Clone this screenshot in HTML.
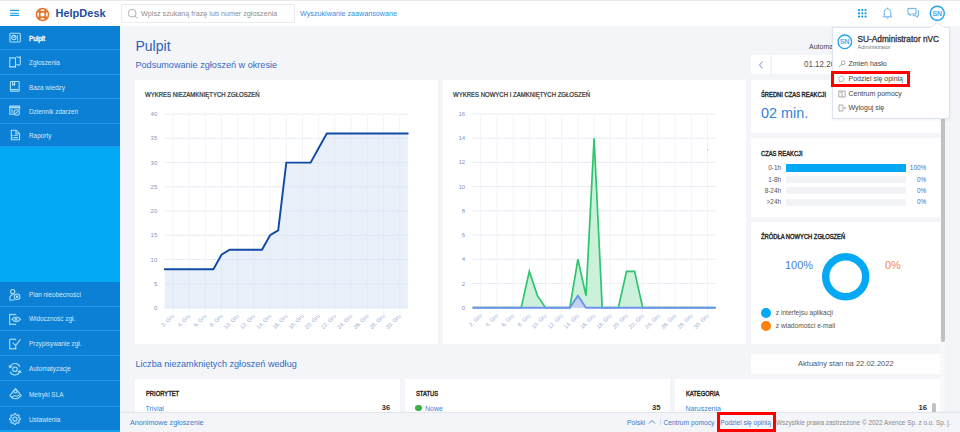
<!DOCTYPE html>
<html><head><meta charset="utf-8">
<style>
*{margin:0;padding:0;box-sizing:border-box}
html,body{width:960px;height:432px;overflow:hidden;background:#f3f5f9;font-family:"Liberation Sans",sans-serif;position:relative}
.abs{position:absolute}
.t{position:absolute;white-space:nowrap;line-height:1}
#top{left:0;top:0;width:960px;height:26px;background:#fff;border-top:1px solid #e9e9e9}
#side{left:0;top:26px;width:120px;height:406px;background:#03a9f4}
.si{position:absolute;left:0;width:120px;background:#0b80d4;border-bottom:1px solid #2398e9}
.si span{position:absolute;left:29px;top:50%;transform:translateY(-50%);font-size:6.4px;color:#d3e9f8;white-space:nowrap}
.si svg{position:absolute;left:9px;top:50%;transform:translateY(-50%)}
.card{position:absolute;background:#fff}
.ct.b{-webkit-text-stroke:0.4px #2a2a2a;transform:scaleX(0.88)}
.ct{position:absolute;font-size:6.6px;font-weight:400;color:#2f2f2f;-webkit-text-stroke:0.22px #2f2f2f;white-space:nowrap;line-height:1;transform:scaleX(0.91);transform-origin:0 0}
svg text.yl{font-family:"Liberation Sans",sans-serif;font-size:6px;fill:#7f95c6}
svg text.xl{font-family:"Liberation Sans",sans-serif;font-size:5.6px;fill:#98acd6}
</style></head><body>

<!-- top bar -->
<div id="top" class="abs">
  <svg class="abs" style="left:10px;top:8px" width="10" height="8" viewBox="0 0 10 8"><rect x="0" y="0.85" width="9.2" height="1.1" rx="0.5" fill="#14a0f0"/><rect x="0" y="3.7" width="9.2" height="1.1" rx="0.5" fill="#14a0f0"/><rect x="0" y="5.85" width="9.2" height="1.1" rx="0.5" fill="#14a0f0"/></svg>
  <svg class="abs" style="left:34.5px;top:5.5px" width="15" height="15" viewBox="0 0 15 15"><circle cx="7.5" cy="7.5" r="6.8" fill="#e8732c"/><circle cx="7.5" cy="7.5" r="2.1" fill="#fff"/><rect x="5.5" y="2.4" width="4" height="1.5" rx="0.6" fill="#fff"/><rect x="5.5" y="11.1" width="4" height="1.5" rx="0.6" fill="#fff"/><rect x="2.4" y="5.5" width="1.5" height="4" rx="0.6" fill="#fff"/><rect x="11.1" y="5.5" width="1.5" height="4" rx="0.6" fill="#fff"/></svg>
  <div class="t" style="left:55.5px;top:6.7px;font-size:11px;font-weight:700;color:#1d4f9f">HelpDesk</div>
  <div class="abs" style="left:121px;top:3px;width:174px;height:19px;border:1px solid #e8ecf0;border-radius:2px;background:#fff"></div>
  <svg class="abs" style="left:127px;top:6.5px" width="12" height="12" viewBox="0 0 12 12"><circle cx="5.2" cy="5.2" r="3.9" fill="none" stroke="#a9a9a9" stroke-width="0.9"/><line x1="8" y1="8" x2="10.5" y2="10.5" stroke="#a9a9a9" stroke-width="0.9"/></svg>
  <div class="t" style="left:141px;top:8.6px;font-size:7.2px;color:#8e8e8e">Wpisz szukaną frazę lub numer zgłoszenia</div>
  <div class="t" style="left:300px;top:9px;font-size:7.2px;color:#2d8fe3">Wyszukiwanie zaawansowane</div>
  <!-- grid icon -->
  <svg class="abs" style="left:857.8px;top:8px" width="9" height="9" viewBox="0 0 9 9" fill="#0d9af0"><circle cx="1.05" cy="1.05" r="1.08"/><circle cx="4.3" cy="1.05" r="1.08"/><circle cx="7.55" cy="1.05" r="1.08"/><circle cx="1.05" cy="4.3" r="1.08"/><circle cx="4.3" cy="4.3" r="1.08"/><circle cx="7.55" cy="4.3" r="1.08"/><circle cx="1.05" cy="7.55" r="1.08"/><circle cx="4.3" cy="7.55" r="1.08"/><circle cx="7.55" cy="7.55" r="1.08"/></svg>
  <!-- bell -->
  <svg class="abs" style="left:882px;top:6.2px" width="11" height="12" viewBox="0 0 11 12"><path d="M2.2 9 L2.2 5.2 C2.2 3.2 3.6 1.8 5.5 1.8 C7.4 1.8 8.8 3.2 8.8 5.2 L8.8 9 L9.8 9.8 L1.2 9.8 Z" fill="none" stroke="#5aa8ea" stroke-width="0.9" stroke-linejoin="round"/><path d="M4.4 10.6 Q5.5 11.8 6.6 10.6" fill="none" stroke="#5aa8ea" stroke-width="0.9"/><line x1="5.5" y1="0.6" x2="5.5" y2="1.8" stroke="#5aa8ea" stroke-width="0.9"/></svg>
  <!-- chat -->
  <svg class="abs" style="left:906.5px;top:6.3px" width="13" height="12" viewBox="0 0 13 12"><path d="M1 1.4 H9 V7 H4.6 L2.8 8.6 V7 H1 Z" fill="none" stroke="#5aa8ea" stroke-width="0.95" stroke-linejoin="round"/><path d="M10.6 3.6 H11.4 V8.8 H10.5 V10.2 L8.9 8.8 H6.3 V8" fill="none" stroke="#5aa8ea" stroke-width="0.95" stroke-linejoin="round"/></svg>
  <!-- avatar -->
  <svg class="abs" style="left:929px;top:4.2px" width="17" height="17" viewBox="0 0 17 17"><circle cx="8.3" cy="8.2" r="7.0" fill="#fff" stroke="#1ea3ef" stroke-width="1.45"/><text x="8.3" y="10.6" text-anchor="middle" font-family="Liberation Sans" font-size="6.8" fill="#2a9be8" stroke="#2a9be8" stroke-width="0.2">SN</text></svg>
</div>

<!-- sidebar -->
<div id="side" class="abs">
  <div class="si" style="top:0.0px;height:24.4px"><span style="color:#fff;-webkit-text-stroke:0.3px #fff">Pulpit</span></div>
  <div class="si" style="top:24.4px;height:24.5px"><span>Zgłoszenia</span></div>
  <div class="si" style="top:48.9px;height:24.4px"><span>Baza wiedzy</span></div>
  <div class="si" style="top:73.3px;height:24.6px"><span>Dziennik zdarzeń</span></div>
  <div class="si" style="top:97.9px;height:23.2px"><span>Raporty</span></div>

  <div class="si" style="top:256.0px;height:24.5px"><span>Plan nieobecności</span></div>
  <div class="si" style="top:280.5px;height:24.8px"><span>Widoczność zgł.</span></div>
  <div class="si" style="top:305.3px;height:25.0px"><span>Przypisywanie zgł.</span></div>
  <div class="si" style="top:330.3px;height:25.0px"><span>Automatyzacje</span></div>
  <div class="si" style="top:355.3px;height:25.5px"><span>Metryki SLA</span></div>
  <div class="si" style="top:380.8px;height:24.7px"><span>Ustawienia</span></div>
</div>
<svg class="abs" style="left:0;top:0" width="120" height="432" viewBox="0 0 120 432" fill="none" stroke="#b0e0fc" stroke-width="1.05" stroke-linejoin="round" stroke-linecap="round">
<rect x="9.9" y="33.2" width="10.4" height="8.7" rx="1"/>
<circle cx="13.9" cy="37.6" r="2.2"/><path d="M13.9 37.6 L15.2 36.4"/><path d="M17.6 35.6 V36.2 M17.6 37.4 V38.2 M17.6 39.4 V40.2"/>
<path d="M9.8 57.6 L11.3 58.3 L12.8 57.6 L14.3 58.3 L15.5 57.8 V67.2 L14.2 66.5 L12.8 67.3 L11.3 66.5 L9.8 67.2 Z"/>
<path d="M16.8 56.8 L18.5 57.5 L20.3 56.8 V64.4 L18.6 65.2 L16.8 64.4"/>
<rect x="10.4" y="81.4" width="8.8" height="9.8" rx="0.8"/><path d="M12.6 81.6 V85.2 L13.6 84.3 L14.6 85.2 V81.6"/><path d="M11.4 89.6 H18.2"/>
<path d="M13.8 114.2 H9.8 V106.1 H19.6 V109.2"/><path d="M9.8 107.6 H19.6"/><path d="M12 109.6 V112.6"/>
<circle cx="16.7" cy="112.5" r="2.7"/><path d="M15.7 113.4 L17.6 111.6"/>
<path d="M11.3 130.2 H16 L19.6 133.7 V139.8 H11.3 Z"/><path d="M15.9 130.4 V133.8 H19.4"/><path d="M14 135.3 H17.5 M14 137.6 H17.5 M11.6 135.3 H12.4 M11.6 137.6 H12.4"/>
<circle cx="12.7" cy="291.6" r="2.1"/><path d="M10 300 C9.3 297 10.4 294.6 13.2 294.4"/><path d="M10 300 H14.2"/>
<circle cx="17.1" cy="296.7" r="2.8"/><circle cx="17.1" cy="296.7" r="0.7" fill="#a8dcfb"/>
<path d="M9.7 314.2 L11.2 314.8 L12.7 314.2 L14.2 314.8 L15.7 314.2 M9.7 314.2 V324.6 L11.2 324 L12.7 324.6 L14.2 324 L15.7 324.6"/>
<path d="M12 319.4 Q16.3 314.8 20.6 319.4 Q16.3 324 12 319.4 Z"/><circle cx="16" cy="319.4" r="0.9"/>
<path d="M15.8 339.6 L14.3 339 L12.8 339.6 L11.3 339 L9.7 339.6 V349 L11.2 348.4 L12.7 349 L14.2 348.4 L15.8 349 V346.5"/>
<path d="M13.2 343.2 L15.6 345.6 L20.2 339.6"/>
<path d="M10 367.2 A5.3 5.3 0 0 1 19.8 366.4"/><path d="M20 371.2 A5.3 5.3 0 0 1 10.2 372"/>
<path d="M9 365.8 L10 367.6 L11.8 366.6" /><path d="M21 372.6 L20 370.8 L18.2 371.8"/>
<circle cx="15" cy="369.2" r="2.3"/>
<path d="M15.5 388.6 L21.2 395.6 Q15.5 402 9.8 395.6 Z"/><circle cx="15.5" cy="391.4" r="1.6"/><path d="M11.5 397.6 Q14 394.8 17 396.4 L19 395"/>
<path d="M20.37 418.47 L20.37 419.53 L19.02 420.22 L18.70 420.98 L19.17 422.43 L18.43 423.17 L16.98 422.70 L16.22 423.02 L15.53 424.37 L14.47 424.37 L13.78 423.02 L13.02 422.70 L11.57 423.17 L10.83 422.43 L11.30 420.98 L10.98 420.22 L9.63 419.53 L9.63 418.47 L10.98 417.78 L11.30 417.02 L10.83 415.57 L11.57 414.83 L13.02 415.30 L13.78 414.98 L14.47 413.63 L15.53 413.63 L16.22 414.98 L16.98 415.30 L18.43 414.83 L19.17 415.57 L18.70 417.02 L19.02 417.78 Z"/><circle cx="15" cy="419" r="2.1"/>
</svg>

<!-- main -->
<div class="t" style="left:135.5px;top:38.5px;font-size:14px;color:#2c61b5">Pulpit</div>
<div class="t" style="left:135.5px;top:61px;font-size:9.1px;color:#3669bf">Podsumowanie zgłoszeń w okresie</div>

<div class="card" style="left:135px;top:80px;width:303px;height:263.5px"></div>
<div class="card" style="left:443px;top:80px;width:303px;height:263.5px"></div>
<div class="ct" style="left:145px;top:92px">WYKRES NIEZAMKNIĘTYCH ZGŁOSZEŃ</div>
<div class="ct" style="left:453px;top:92px">WYKRES NOWYCH I ZAMKNIĘTYCH ZGŁOSZEŃ</div>

<svg class="abs" style="left:0;top:0" width="960" height="432" viewBox="0 0 960 432">
<line x1="164.8" y1="308.0" x2="407.8" y2="308.0" stroke="#e7ecf5" stroke-width="1"/>
<text x="157.3" y="310.0" text-anchor="end" class="yl">0</text>
<line x1="164.8" y1="283.8" x2="407.8" y2="283.8" stroke="#e7ecf5" stroke-width="1"/>
<text x="157.3" y="285.8" text-anchor="end" class="yl">5</text>
<line x1="164.8" y1="259.5" x2="407.8" y2="259.5" stroke="#e7ecf5" stroke-width="1"/>
<text x="157.3" y="261.5" text-anchor="end" class="yl">10</text>
<line x1="164.8" y1="235.3" x2="407.8" y2="235.3" stroke="#e7ecf5" stroke-width="1"/>
<text x="157.3" y="237.3" text-anchor="end" class="yl">15</text>
<line x1="164.8" y1="211.1" x2="407.8" y2="211.1" stroke="#e7ecf5" stroke-width="1"/>
<text x="157.3" y="213.1" text-anchor="end" class="yl">20</text>
<line x1="164.8" y1="186.8" x2="407.8" y2="186.8" stroke="#e7ecf5" stroke-width="1"/>
<text x="157.3" y="188.8" text-anchor="end" class="yl">25</text>
<line x1="164.8" y1="162.6" x2="407.8" y2="162.6" stroke="#e7ecf5" stroke-width="1"/>
<text x="157.3" y="164.6" text-anchor="end" class="yl">30</text>
<line x1="164.8" y1="138.3" x2="407.8" y2="138.3" stroke="#e7ecf5" stroke-width="1"/>
<text x="157.3" y="140.3" text-anchor="end" class="yl">35</text>
<line x1="164.8" y1="114.1" x2="407.8" y2="114.1" stroke="#e7ecf5" stroke-width="1"/>
<text x="157.3" y="116.1" text-anchor="end" class="yl">40</text>
<line x1="172.9" y1="114.1" x2="172.9" y2="312.5" stroke="#f0f3f9" stroke-width="1"/>
<text transform="translate(174.5,316.3) rotate(-45)" text-anchor="end" class="xl">2. Gru</text>
<line x1="189.1" y1="114.1" x2="189.1" y2="312.5" stroke="#f0f3f9" stroke-width="1"/>
<text transform="translate(190.7,316.3) rotate(-45)" text-anchor="end" class="xl">4. Gru</text>
<line x1="205.3" y1="114.1" x2="205.3" y2="312.5" stroke="#f0f3f9" stroke-width="1"/>
<text transform="translate(206.9,316.3) rotate(-45)" text-anchor="end" class="xl">6. Gru</text>
<line x1="221.5" y1="114.1" x2="221.5" y2="312.5" stroke="#f0f3f9" stroke-width="1"/>
<text transform="translate(223.1,316.3) rotate(-45)" text-anchor="end" class="xl">8. Gru</text>
<line x1="237.7" y1="114.1" x2="237.7" y2="312.5" stroke="#f0f3f9" stroke-width="1"/>
<text transform="translate(239.3,316.3) rotate(-45)" text-anchor="end" class="xl">10. Gru</text>
<line x1="253.9" y1="114.1" x2="253.9" y2="312.5" stroke="#f0f3f9" stroke-width="1"/>
<text transform="translate(255.5,316.3) rotate(-45)" text-anchor="end" class="xl">12. Gru</text>
<line x1="270.1" y1="114.1" x2="270.1" y2="312.5" stroke="#f0f3f9" stroke-width="1"/>
<text transform="translate(271.7,316.3) rotate(-45)" text-anchor="end" class="xl">14. Gru</text>
<line x1="286.3" y1="114.1" x2="286.3" y2="312.5" stroke="#f0f3f9" stroke-width="1"/>
<text transform="translate(287.9,316.3) rotate(-45)" text-anchor="end" class="xl">16. Gru</text>
<line x1="302.5" y1="114.1" x2="302.5" y2="312.5" stroke="#f0f3f9" stroke-width="1"/>
<text transform="translate(304.1,316.3) rotate(-45)" text-anchor="end" class="xl">18. Gru</text>
<line x1="318.7" y1="114.1" x2="318.7" y2="312.5" stroke="#f0f3f9" stroke-width="1"/>
<text transform="translate(320.3,316.3) rotate(-45)" text-anchor="end" class="xl">20. Gru</text>
<line x1="334.9" y1="114.1" x2="334.9" y2="312.5" stroke="#f0f3f9" stroke-width="1"/>
<text transform="translate(336.5,316.3) rotate(-45)" text-anchor="end" class="xl">22. Gru</text>
<line x1="351.1" y1="114.1" x2="351.1" y2="312.5" stroke="#f0f3f9" stroke-width="1"/>
<text transform="translate(352.7,316.3) rotate(-45)" text-anchor="end" class="xl">24. Gru</text>
<line x1="367.3" y1="114.1" x2="367.3" y2="312.5" stroke="#f0f3f9" stroke-width="1"/>
<text transform="translate(368.9,316.3) rotate(-45)" text-anchor="end" class="xl">26. Gru</text>
<line x1="383.5" y1="114.1" x2="383.5" y2="312.5" stroke="#f0f3f9" stroke-width="1"/>
<text transform="translate(385.1,316.3) rotate(-45)" text-anchor="end" class="xl">28. Gru</text>
<line x1="399.7" y1="114.1" x2="399.7" y2="312.5" stroke="#f0f3f9" stroke-width="1"/>
<text transform="translate(401.3,316.3) rotate(-45)" text-anchor="end" class="xl">30. Gru</text>
<polygon points="164.8,308.0 164.8,269.2 172.9,269.2 181.0,269.2 189.1,269.2 197.2,269.2 205.3,269.2 213.4,269.2 221.5,254.7 229.6,249.8 237.7,249.8 245.8,249.8 253.9,249.8 262.0,249.8 270.1,235.3 278.2,230.4 286.3,162.6 294.4,162.6 302.5,162.6 310.6,162.6 318.7,148.0 326.8,133.5 334.9,133.5 343.0,133.5 351.1,133.5 359.2,133.5 367.3,133.5 375.4,133.5 383.5,133.5 391.6,133.5 399.7,133.5 407.8,133.5 407.8,308.0" fill="#d4e0f3" fill-opacity="0.48"/>
<polyline points="164.8,269.2 172.9,269.2 181.0,269.2 189.1,269.2 197.2,269.2 205.3,269.2 213.4,269.2 221.5,254.7 229.6,249.8 237.7,249.8 245.8,249.8 253.9,249.8 262.0,249.8 270.1,235.3 278.2,230.4 286.3,162.6 294.4,162.6 302.5,162.6 310.6,162.6 318.7,148.0 326.8,133.5 334.9,133.5 343.0,133.5 351.1,133.5 359.2,133.5 367.3,133.5 375.4,133.5 383.5,133.5 391.6,133.5 399.7,133.5 407.8,133.5" fill="none" stroke="#114aa6" stroke-width="1.9" stroke-linejoin="miter" stroke-linecap="round"/>
<line x1="472.6" y1="307.7" x2="715.6" y2="307.7" stroke="#e7ecf5" stroke-width="1"/>
<text x="465.1" y="309.7" text-anchor="end" class="yl">0</text>
<line x1="472.6" y1="283.5" x2="715.6" y2="283.5" stroke="#e7ecf5" stroke-width="1"/>
<text x="465.1" y="285.5" text-anchor="end" class="yl">2</text>
<line x1="472.6" y1="259.3" x2="715.6" y2="259.3" stroke="#e7ecf5" stroke-width="1"/>
<text x="465.1" y="261.3" text-anchor="end" class="yl">4</text>
<line x1="472.6" y1="235.1" x2="715.6" y2="235.1" stroke="#e7ecf5" stroke-width="1"/>
<text x="465.1" y="237.1" text-anchor="end" class="yl">6</text>
<line x1="472.6" y1="210.8" x2="715.6" y2="210.8" stroke="#e7ecf5" stroke-width="1"/>
<text x="465.1" y="212.8" text-anchor="end" class="yl">8</text>
<line x1="472.6" y1="186.6" x2="715.6" y2="186.6" stroke="#e7ecf5" stroke-width="1"/>
<text x="465.1" y="188.6" text-anchor="end" class="yl">10</text>
<line x1="472.6" y1="162.4" x2="715.6" y2="162.4" stroke="#e7ecf5" stroke-width="1"/>
<text x="465.1" y="164.4" text-anchor="end" class="yl">12</text>
<line x1="472.6" y1="138.2" x2="715.6" y2="138.2" stroke="#e7ecf5" stroke-width="1"/>
<text x="465.1" y="140.2" text-anchor="end" class="yl">14</text>
<line x1="472.6" y1="114.0" x2="715.6" y2="114.0" stroke="#e7ecf5" stroke-width="1"/>
<text x="465.1" y="116.0" text-anchor="end" class="yl">16</text>
<line x1="480.7" y1="114.0" x2="480.7" y2="312.2" stroke="#f0f3f9" stroke-width="1"/>
<text transform="translate(482.3,316.0) rotate(-45)" text-anchor="end" class="xl">2. Gru</text>
<line x1="496.9" y1="114.0" x2="496.9" y2="312.2" stroke="#f0f3f9" stroke-width="1"/>
<text transform="translate(498.5,316.0) rotate(-45)" text-anchor="end" class="xl">4. Gru</text>
<line x1="513.1" y1="114.0" x2="513.1" y2="312.2" stroke="#f0f3f9" stroke-width="1"/>
<text transform="translate(514.7,316.0) rotate(-45)" text-anchor="end" class="xl">6. Gru</text>
<line x1="529.3" y1="114.0" x2="529.3" y2="312.2" stroke="#f0f3f9" stroke-width="1"/>
<text transform="translate(530.9,316.0) rotate(-45)" text-anchor="end" class="xl">8. Gru</text>
<line x1="545.5" y1="114.0" x2="545.5" y2="312.2" stroke="#f0f3f9" stroke-width="1"/>
<text transform="translate(547.1,316.0) rotate(-45)" text-anchor="end" class="xl">10. Gru</text>
<line x1="561.7" y1="114.0" x2="561.7" y2="312.2" stroke="#f0f3f9" stroke-width="1"/>
<text transform="translate(563.3,316.0) rotate(-45)" text-anchor="end" class="xl">12. Gru</text>
<line x1="577.9" y1="114.0" x2="577.9" y2="312.2" stroke="#f0f3f9" stroke-width="1"/>
<text transform="translate(579.5,316.0) rotate(-45)" text-anchor="end" class="xl">14. Gru</text>
<line x1="594.1" y1="114.0" x2="594.1" y2="312.2" stroke="#f0f3f9" stroke-width="1"/>
<text transform="translate(595.7,316.0) rotate(-45)" text-anchor="end" class="xl">16. Gru</text>
<line x1="610.3" y1="114.0" x2="610.3" y2="312.2" stroke="#f0f3f9" stroke-width="1"/>
<text transform="translate(611.9,316.0) rotate(-45)" text-anchor="end" class="xl">18. Gru</text>
<line x1="626.5" y1="114.0" x2="626.5" y2="312.2" stroke="#f0f3f9" stroke-width="1"/>
<text transform="translate(628.1,316.0) rotate(-45)" text-anchor="end" class="xl">20. Gru</text>
<line x1="642.7" y1="114.0" x2="642.7" y2="312.2" stroke="#f0f3f9" stroke-width="1"/>
<text transform="translate(644.3,316.0) rotate(-45)" text-anchor="end" class="xl">22. Gru</text>
<line x1="658.9" y1="114.0" x2="658.9" y2="312.2" stroke="#f0f3f9" stroke-width="1"/>
<text transform="translate(660.5,316.0) rotate(-45)" text-anchor="end" class="xl">24. Gru</text>
<line x1="675.1" y1="114.0" x2="675.1" y2="312.2" stroke="#f0f3f9" stroke-width="1"/>
<text transform="translate(676.7,316.0) rotate(-45)" text-anchor="end" class="xl">26. Gru</text>
<line x1="691.3" y1="114.0" x2="691.3" y2="312.2" stroke="#f0f3f9" stroke-width="1"/>
<text transform="translate(692.9,316.0) rotate(-45)" text-anchor="end" class="xl">28. Gru</text>
<line x1="707.5" y1="114.0" x2="707.5" y2="312.2" stroke="#f0f3f9" stroke-width="1"/>
<text transform="translate(709.1,316.0) rotate(-45)" text-anchor="end" class="xl">30. Gru</text>
<polygon points="472.6,307.7 472.6,307.7 480.7,307.7 488.8,307.7 496.9,307.7 505.0,307.7 513.1,307.7 521.2,307.7 529.3,271.4 537.4,295.6 545.5,307.7 553.6,307.7 561.7,307.7 569.8,307.7 577.9,259.3 586.0,295.6 594.1,138.2 602.2,307.7 610.3,307.7 618.4,307.7 626.5,271.4 634.6,271.4 642.7,307.7 650.8,307.7 658.9,307.7 667.0,307.7 675.1,307.7 683.2,307.7 691.3,307.7 699.4,307.7 707.5,307.7 715.6,307.7 715.6,307.7" fill="#c6efd6" fill-opacity="0.9"/>
<polyline points="472.6,307.7 480.7,307.7 488.8,307.7 496.9,307.7 505.0,307.7 513.1,307.7 521.2,307.7 529.3,271.4 537.4,295.6 545.5,307.7 553.6,307.7 561.7,307.7 569.8,307.7 577.9,259.3 586.0,295.6 594.1,138.2 602.2,307.7 610.3,307.7 618.4,307.7 626.5,271.4 634.6,271.4 642.7,307.7 650.8,307.7 658.9,307.7 667.0,307.7 675.1,307.7 683.2,307.7 691.3,307.7 699.4,307.7 707.5,307.7 715.6,307.7" fill="none" stroke="#2fc46e" stroke-width="1.7" stroke-linejoin="miter"/>
<polygon points="472.6,307.7 472.6,307.7 480.7,307.7 488.8,307.7 496.9,307.7 505.0,307.7 513.1,307.7 521.2,307.7 529.3,307.7 537.4,307.7 545.5,307.7 553.6,307.7 561.7,307.7 569.8,307.7 577.9,295.6 586.0,307.7 594.1,307.7 602.2,307.7 610.3,307.7 618.4,307.7 626.5,307.7 634.6,307.7 642.7,307.7 650.8,307.7 658.9,307.7 667.0,307.7 675.1,307.7 683.2,307.7 691.3,307.7 699.4,307.7 707.5,307.7 715.6,307.7 715.6,307.7" fill="#c3d1f5" fill-opacity="0.95"/>
<polyline points="472.6,307.7 480.7,307.7 488.8,307.7 496.9,307.7 505.0,307.7 513.1,307.7 521.2,307.7 529.3,307.7 537.4,307.7 545.5,307.7 553.6,307.7 561.7,307.7 569.8,307.7 577.9,295.6 586.0,307.7 594.1,307.7 602.2,307.7 610.3,307.7 618.4,307.7 626.5,307.7 634.6,307.7 642.7,307.7 650.8,307.7 658.9,307.7 667.0,307.7 675.1,307.7 683.2,307.7 691.3,307.7 699.4,307.7 707.5,307.7 715.6,307.7" fill="none" stroke="#6f94ee" stroke-width="1.9"/>
<rect x="707" y="149" width="1.2" height="1.2" fill="#f39aa2"/>
</svg>

<!-- right column -->
<div class="t" style="left:809px;top:42.5px;font-size:7px;color:#444">Automatyczne odświeżanie</div>
<div class="card" style="left:751px;top:55px;width:19px;height:19px"></div>
<svg class="abs" style="left:757px;top:59.5px" width="8" height="10" viewBox="0 0 8 10"><path d="M5.5 1.5 L2.5 5 L5.5 8.5" fill="none" stroke="#5f86c8" stroke-width="0.9"/></svg>
<div class="card" style="left:772px;top:55px;width:168px;height:19px"></div>
<div class="t" style="left:804px;top:60.3px;font-size:9.3px;color:#555;transform:scaleX(0.86);transform-origin:0 0">01.12.2021 - 31.12.2021</div>

<div class="card" style="left:751px;top:80px;width:189px;height:53px"></div>
<div class="ct b" style="left:761px;top:91.5px">ŚREDNI CZAS REAKCJI</div>
<div class="t" style="left:761.1px;top:106.1px;font-size:14.4px;color:#2f82d8">02 min.</div>

<div class="card" style="left:751px;top:138px;width:189px;height:79px"></div>
<div class="ct b" style="left:761px;top:150.5px">CZAS REAKCJI</div>
<div class="t" style="right:179px;top:165px;font-size:6.4px;color:#555">0-1h</div>
<div class="t" style="right:179px;top:176.5px;font-size:6.4px;color:#555">1-8h</div>
<div class="t" style="right:179px;top:187.5px;font-size:6.4px;color:#555">8-24h</div>
<div class="t" style="right:179px;top:199px;font-size:6.4px;color:#555">&gt;24h</div>
<div class="abs" style="left:786px;top:164px;width:120px;height:8px;background:#03a9f4"></div>
<div class="abs" style="left:786px;top:176px;width:120px;height:7px;background:#f1f3f7"></div>
<div class="abs" style="left:786px;top:187px;width:120px;height:7px;background:#f1f3f7"></div>
<div class="abs" style="left:786px;top:198.5px;width:120px;height:7px;background:#f1f3f7"></div>
<div class="t" style="right:33.8px;top:165px;font-size:6.4px;color:#3e6fc4">100%</div>
<div class="t" style="right:33.8px;top:176.5px;font-size:6.4px;color:#3e6fc4">0%</div>
<div class="t" style="right:33.8px;top:187.5px;font-size:6.4px;color:#3e6fc4">0%</div>
<div class="t" style="right:33.8px;top:199px;font-size:6.4px;color:#3e6fc4">0%</div>

<div class="card" style="left:751px;top:222px;width:189.4px;height:121.6px"></div>
<div class="ct b" style="left:761px;top:233.5px">ŹRÓDŁA NOWYCH ZGŁOSZEŃ</div>
<div class="t" style="left:785px;top:260.3px;font-size:11px;color:#4a80d2">100%</div>
<div class="t" style="left:885px;top:260.3px;font-size:11px;color:#f58a3a">0%</div>
<svg class="abs" style="left:820px;top:251px" width="52" height="52" viewBox="0 0 52 52"><circle cx="25.7" cy="25.7" r="20" fill="none" stroke="#03a9f4" stroke-width="7.4"/></svg>
<div class="abs" style="left:760.9px;top:308px;width:9.8px;height:9.8px;border-radius:50%;background:#03a9f4"></div>
<div class="abs" style="left:760.9px;top:320.9px;width:9.8px;height:9.8px;border-radius:50%;background:#ff800f"></div>
<div class="t" style="left:775.8px;top:309.8px;font-size:6.6px;color:#555">z interfejsu aplikacji</div>
<div class="t" style="left:775.8px;top:322.5px;font-size:6.6px;color:#555">z wiadomości e-mail</div>

<div class="card" style="left:751px;top:354px;width:189px;height:19.5px"></div>
<div class="t" style="left:798px;top:359.8px;font-size:7.55px;color:#555">Aktualny stan na 22.02.2022</div>

<!-- scrollbar -->
<div class="abs" style="left:940.4px;top:55px;width:4.6px;height:356px;background:#f8f9fb"></div>
<div class="abs" style="left:941px;top:80px;width:4px;height:262.3px;background:#c1c1c5;border-radius:2px"></div>

<!-- bottom -->
<div class="t" style="left:135.5px;top:359.9px;font-size:9.1px;color:#3669bf">Liczba niezamkniętych zgłoszeń według</div>
<div class="card" style="left:135px;top:379px;width:265px;height:40px"></div>
<div class="card" style="left:405.3px;top:379px;width:264.7px;height:40px"></div>
<div class="card" style="left:675px;top:379px;width:265px;height:40px"></div>
<div class="ct b" style="left:145.5px;top:390.5px">PRIORYTET</div>
<div class="ct b" style="left:415.5px;top:390.5px">STATUS</div>
<div class="ct b" style="left:685.5px;top:390.5px">KATEGORIA</div>
<div class="t" style="left:145.5px;top:404.5px;font-size:7px;color:#3b84d6">Trivial</div>
<div class="t" style="right:569.8px;top:404.1px;font-size:7.6px;font-weight:700;color:#333">36</div>
<div class="abs" style="left:415.4px;top:405.2px;width:6.2px;height:6.2px;border-radius:50%;background:#3bb043"></div>
<div class="t" style="left:425px;top:404.5px;font-size:7px;color:#3b84d6">Nowe</div>
<div class="t" style="right:299.6px;top:404.1px;font-size:7.6px;font-weight:700;color:#333">35</div>
<div class="t" style="left:685.5px;top:404.5px;font-size:7px;color:#3b84d6">Naruszenia</div>
<div class="t" style="right:33px;top:404.1px;font-size:7.6px;font-weight:700;color:#333">16</div>
<div class="abs" style="left:932px;top:403px;width:3.5px;height:10px;background:#c2c2c6;border-radius:1.5px"></div>

<!-- footer -->
<div class="abs" style="left:120px;top:411.8px;width:840px;height:20.2px;background:#f3f5f9;border-top:1px solid #e2e6ea;box-shadow:0 -1.5px 2.5px rgba(0,0,0,0.025)"></div>
<div class="t" style="left:130px;top:418.8px;font-size:7.2px;color:#3a7ccf">Anonimowe zgłoszenie</div>
<div class="t" style="left:627px;top:419.7px;font-size:6.8px;color:#3f78cc">Polski</div>
<svg class="abs" style="left:648px;top:419px" width="8" height="6" viewBox="0 0 8 6"><path d="M1 4.5 L4 1.5 L7 4.5" fill="none" stroke="#3f78cc" stroke-width="0.9"/></svg>
<div class="abs" style="left:660.2px;top:419px;width:0.8px;height:5.8px;background:#d5dbe2"></div>
<div class="t" style="left:663.5px;top:419.8px;font-size:6.7px;color:#3f78cc">Centrum pomocy</div>
<div class="t" style="left:720.3px;top:419.9px;font-size:6.5px;color:#3f78cc">Podziel się opinią</div>
<div class="t" style="left:776px;top:419.9px;font-size:6.4px;color:#8a8a8a">Wszystkie prawa zastrzeżone © 2022 Axence Sp. z o.o. Sp. j.</div>
<div class="abs" style="left:716.9px;top:411.9px;width:58.7px;height:20.3px;border:3px solid #ff0000"></div>

<!-- dropdown -->
<div class="abs" style="left:831.5px;top:26.5px;width:118px;height:92px;background:#fff;border:1px solid #dbe4ee;box-shadow:0 1px 3px rgba(0,0,0,0.06)"></div>
<svg class="abs" style="left:931px;top:21px" width="13" height="7" viewBox="0 0 13 7"><path d="M0 6.6 L6.2 0.8 L12.4 6.6" fill="#fff" stroke="#dbe4ee" stroke-width="1"/><rect x="0" y="6" width="13" height="1.2" fill="#fff"/></svg>
<svg class="abs" style="left:836.5px;top:34px" width="16" height="16" viewBox="0 0 16 16"><circle cx="7.8" cy="7.8" r="6.8" fill="#fff" stroke="#1ea3ef" stroke-width="1.3"/><text x="7.8" y="10.2" text-anchor="middle" font-family="Liberation Sans" font-size="6.8" fill="#2a9be8" stroke="#2a9be8" stroke-width="0.15">SN</text></svg>
<div class="t" style="left:857.5px;top:34.9px;font-size:8.3px;font-weight:400;color:#333;-webkit-text-stroke:0.3px #333">SU-Administrator nVC</div>
<div class="t" style="left:857.5px;top:44.8px;font-size:5.6px;color:#777">Administrator</div>
<svg class="abs" style="left:838px;top:60px" width="8" height="8" viewBox="0 0 8 8"><circle cx="5.2" cy="2.8" r="1.9" fill="none" stroke="#8a8a8a" stroke-width="0.7"/><path d="M3.8 4.2 L1 7" stroke="#8a8a8a" stroke-width="0.8"/></svg>
<div class="t" style="left:848.5px;top:60px;font-size:7px;color:#444">Zmień hasło</div>
<svg class="abs" style="left:838px;top:75px" width="8" height="8" viewBox="0 0 8 8"><path d="M3.4 1.3 C5 1.3 6 2.4 6 3.9 C6 5.4 5 6.5 3.4 6.5 L1.3 6.8 L1.6 5.6 C1 5 0.8 4.5 0.8 3.9 C0.8 2.4 1.8 1.3 3.4 1.3 Z" fill="none" stroke="#9a9a9a" stroke-width="0.7"/></svg>
<div class="t" style="left:848.5px;top:75px;font-size:7px;color:#444">Podziel się opinią</div>
<svg class="abs" style="left:838px;top:89.5px" width="8" height="8" viewBox="0 0 8 8"><path d="M0.8 1 H7.2 V7 H0.8 Z M4 1 V7 M2.2 2.5 H3" fill="none" stroke="#8a8a8a" stroke-width="0.7"/></svg>
<div class="t" style="left:848.5px;top:89.5px;font-size:7px;color:#444">Centrum pomocy</div>
<svg class="abs" style="left:838px;top:104px" width="8" height="8" viewBox="0 0 8 8"><path d="M5 2.5 V1 H1 V7 H5 V5.5 M3.5 4 H7.5 M6.3 2.8 L7.5 4 L6.3 5.2" fill="none" stroke="#8a8a8a" stroke-width="0.7"/></svg>
<div class="t" style="left:848.5px;top:104px;font-size:7px;color:#444">Wyloguj się</div>
<div class="abs" style="left:831.1px;top:70.9px;width:79.4px;height:15.9px;border:3px solid #ff0000"></div>

</body></html>
